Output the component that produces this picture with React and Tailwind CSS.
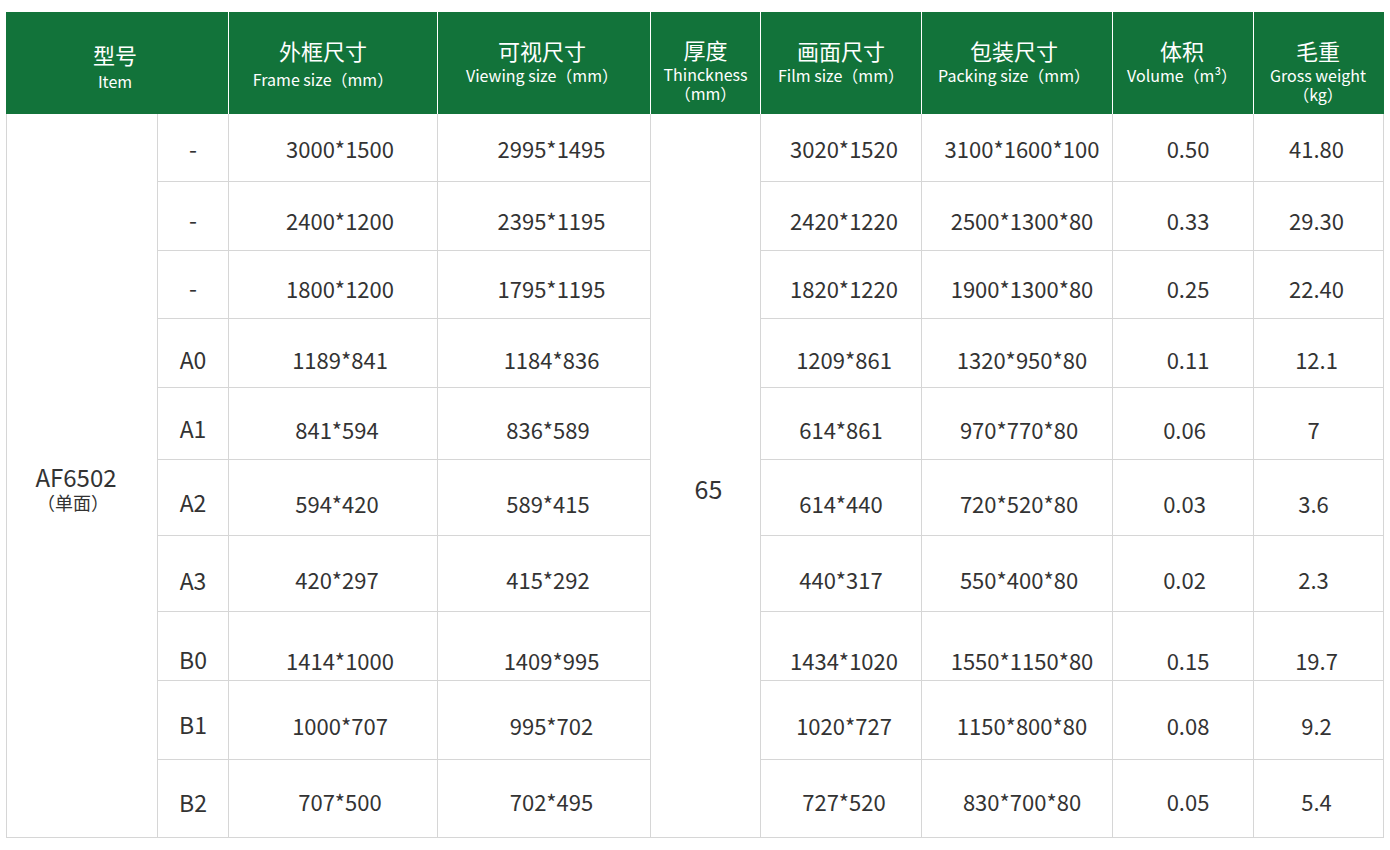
import React from "react";

const rows = [
  { item: "-", frame: "3000*1500", view: "2995*1495", film: "3020*1520", pack: "3100*1600*100", vol: "0.50", gw: "41.80", pt: "pt-[1px]", ipt: "pt-[1px]", shift: false },
  { item: "-", frame: "2400*1200", view: "2395*1195", film: "2420*1220", pack: "2500*1300*80", vol: "0.33", gw: "29.30", pt: "pt-[7px]", ipt: "pt-[7px]", shift: false },
  { item: "-", frame: "1800*1200", view: "1795*1195", film: "1820*1220", pack: "1900*1300*80", vol: "0.25", gw: "22.40", pt: "pt-[6px]", ipt: "pt-[6px]", shift: false },
  { item: "A0", frame: "1189*841", view: "1184*836", film: "1209*861", pack: "1320*950*80", vol: "0.11", gw: "12.1", pt: "pt-[11px]", ipt: "pt-[13px]", shift: false },
  { item: "A1", frame: "841*594", view: "836*589", film: "614*861", pack: "970*770*80", vol: "0.06", gw: "7", pt: "pt-[10px]", ipt: "pt-[9px]", shift: true },
  { item: "A2", frame: "594*420", view: "589*415", film: "614*440", pack: "720*520*80", vol: "0.03", gw: "3.6", pt: "pt-[11px]", ipt: "pt-[9px]", shift: true },
  { item: "A3", frame: "420*297", view: "415*292", film: "440*317", pack: "550*400*80", vol: "0.02", gw: "2.3", pt: "pt-[10px]", ipt: "pt-[14px]", shift: true },
  { item: "B0", frame: "1414*1000", view: "1409*995", film: "1434*1020", pack: "1550*1150*80", vol: "0.15", gw: "19.7", pt: "pt-[27px]", ipt: "pt-[26px]", shift: false },
  { item: "B1", frame: "1000*707", view: "995*702", film: "1020*727", pack: "1150*800*80", vol: "0.08", gw: "9.2", pt: "pt-[10px]", ipt: "pt-[8px]", shift: false },
  { item: "B2", frame: "707*500", view: "702*495", film: "727*520", pack: "830*700*80", vol: "0.05", gw: "5.4", pt: "pt-[5px]", ipt: "pt-[8px]", shift: false },
];

const padNormal = ["pl-[14px]", "pl-[15px]", "pl-[6px]", "pl-[10px]", "pl-[10px]", "pr-[4px]"];
const padShift = ["pl-[8px]", "pl-[8px]", "", "pl-[4px]", "pl-[3px]", "pr-[10px]"];

function Cell({ children, className = "" }) {
  return (
    <div className={`flex items-center justify-center bg-white ${className}`}>
      <span className="leading-none whitespace-nowrap">{children}</span>
    </div>
  );
}

function Head({ cn, en, extra, cnPt = "pt-[25px]", enMt = "mt-[3px]", pad = "" }) {
  return (
    <div className={`flex flex-col items-center bg-[#12733a] text-white ${cnPt} ${pad}`}>
      <div className="text-[22px] leading-[26px]">{cn}</div>
      <div className={`text-[16px] leading-[19px] whitespace-nowrap ${enMt}`}>{en}</div>
      {extra && <div className="text-[16px] leading-[19px] whitespace-nowrap">{extra}</div>}
    </div>
  );
}

export default function App() {
  return (
    <div className="min-h-[850px] bg-white pt-[12px] pl-[6px] font-['Noto_Sans_CJK_SC','Noto_Sans',sans-serif] text-[#333333]">
      <div className="w-[1378px]">
        <div className="grid h-[102px] grid-cols-[222px_208px_212px_109px_160px_190px_140px_130px] gap-px bg-white">
          <Head cn="型号" en="Item" cnPt="pt-[29px]" enMt="mt-[5px]" pad="pr-[4px]" />
          <Head cn="外框尺寸" en="Frame size（mm）" enMt="mt-[7px]" pad="pr-[20px]" />
          <Head cn="可视尺寸" en="Viewing size（mm）" pad="pr-[4px]" />
          <Head cn="厚度" en="Thinckness" extra="（mm）" cnPt="pt-[24px]" />
          <Head cn="画面尺寸" en="Film size（mm）" />
          <Head cn="包装尺寸" en="Packing size（mm）" pad="pr-[6px]" />
          <Head cn="体积" en="Volume（m³）" pad="pr-[2px]" />
          <Head cn="毛重" en="Gross weight" extra="（kg）" pad="pr-[2px]" />
        </div>
        <div className="grid grid-cols-[150px_70px_208px_212px_109px_160px_190px_140px_129px] grid-rows-[67px_68px_67px_68px_71px_75px_75px_68px_78px_77px] gap-px bg-[#d6d6d6] px-px pb-px text-[22px]">
          <div className="row-[span_10/span_10] flex flex-col items-center justify-center bg-white pt-[25px] pr-[12px]">
            <span className="text-[24px] leading-[28px]">AF6502</span>
            <span className="mr-[6px] text-[18px] leading-[22px]">（单面）</span>
          </div>
          {rows.map((r, i) => {
            const pad = r.shift ? padShift : padNormal;
            const cells = [
              <Cell key="item" className={`${r.ipt} text-[23px]`}>{r.item}</Cell>,
              <Cell key="frame" className={`${r.pt} ${pad[0]}`}>{r.frame}</Cell>,
              <Cell key="view" className={`${r.pt} ${pad[1]}`}>{r.view}</Cell>,
            ];
            if (i === 0) {
              cells.push(
                <div key="thick" className="row-[span_10/span_10] flex items-center justify-center bg-white pt-[26px] pl-[6px]">
                  <span className="text-[25px] leading-none">65</span>
                </div>
              );
            }
            cells.push(
              <Cell key="film" className={`${r.pt} ${pad[2]}`}>{r.film}</Cell>,
              <Cell key="pack" className={`${r.pt} ${pad[3]}`}>{r.pack}</Cell>,
              <Cell key="vol" className={`${r.pt} ${pad[4]}`}>{r.vol}</Cell>,
              <Cell key="gw" className={`${r.pt} ${pad[5]}`}>{r.gw}</Cell>
            );
            return <React.Fragment key={i}>{cells}</React.Fragment>;
          })}
        </div>
      </div>
    </div>
  );
}
